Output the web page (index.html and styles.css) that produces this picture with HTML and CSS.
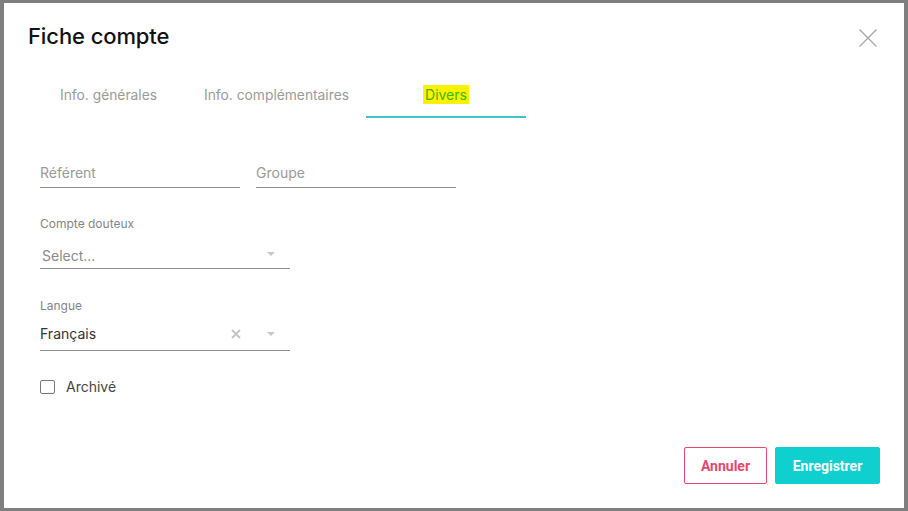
FILE: index.html
```html
<!DOCTYPE html>
<html lang="fr">
<head>
<meta charset="utf-8">
<title>Fiche compte</title>
<link rel="stylesheet" href="styles.css">
</head>
<body>
<div class="dialog">
  <div class="header">
    <h1 class="title">Fiche compte</h1>
    <button class="close" aria-label="Fermer">
      <svg width="18" height="18" viewBox="0 0 18 18"><path d="M0.5 0.5 L17.5 17.5 M17.5 0.5 L0.5 17.5" stroke="#a8a8a8" stroke-width="1.4" fill="none"/></svg>
    </button>
  </div>
  <div class="tabs">
    <div class="tab tab-1">Info. générales</div>
    <div class="tab tab-2">Info. complémentaires</div>
    <div class="tab tab-active"><span class="mark">Divers</span></div>
  </div>
  <div class="form">
    <div class="row">
      <div class="input"><span class="placeholder">Référent</span></div>
      <div class="input"><span class="placeholder">Groupe</span></div>
    </div>
    <div class="label label-1">Compte douteux</div>
    <div class="select select-1">
      <span class="placeholder sel-ph">Select...</span>
      <span class="icons"><span class="caret"></span></span>
    </div>
    <div class="label label-2">Langue</div>
    <div class="select select-2">
      <span class="value">Français</span>
      <span class="icons">
        <svg class="clear" width="10" height="10" viewBox="0 0 10 10"><path d="M1 1 L9 9 M9 1 L1 9" stroke="#c4c4c4" stroke-width="1.8" fill="none"/></svg>
        <span class="caret"></span>
      </span>
    </div>
    <label class="check">
      <span class="box"></span>
      <span class="check-text">Archivé</span>
    </label>
  </div>
  <div class="footer">
    <button class="btn btn-cancel">Annuler</button>
    <button class="btn btn-save">Enregistrer</button>
  </div>
</div>
</body>
</html>
```
FILE: styles.css
```css
* { box-sizing: border-box; }
html, body { margin: 0; height: 100%; }
body {
  background: #7f7f7f;
  padding: 3px 4px;
  font-family: Inter, Roboto, "Liberation Sans", Arial, sans-serif;
}
.dialog {
  width: 900px;
  height: 505px;
  background: #fff;
  display: flex;
  flex-direction: column;
  padding: 0 24px 24px 24px;
}
.header {
  display: flex;
  justify-content: space-between;
  align-items: flex-start;
  padding-top: 19px;
}
.title {
  margin: 0;
  font-size: 22px;
  line-height: 28px;
  font-weight: 500;
  color: #111;
  letter-spacing: -0.1px;
}
.close {
  border: 0;
  background: none;
  padding: 0;
  margin: 7px 3px 0 0;
  width: 18px;
  height: 18px;
  display: block;
}
.close svg { display: block; }
.tabs {
  display: flex;
  margin-top: 25px;
  margin-left: 32px;
}
.tab {
  font-size: 13.8px;
  line-height: 20px;
  color: #9a9a9a;
  padding: 10px 0 11px;
  border-bottom: 2px solid transparent;
  white-space: nowrap;
}
.tab-1 { width: 144px; }
.tab-2 { width: 162px; }
.tab-active {
  width: 160px;
  text-align: center;
  border-bottom-color: #3cc6c6;
}
.mark {
  background: #fff200;
  color: #3ab700;
  padding: 1px 2px;
  font-size: 14px;
}
.form {
  padding-left: 12px;
}
.row {
  display: flex;
  gap: 16px;
  margin-top: 45px;
}
.input {
  width: 200px;
  height: 25px;
  border-bottom: 1px solid #8c8c8c;
  font-size: 14px;
  line-height: 20px;
}
.placeholder { color: #9a9a9a; }
.label {
  font-size: 12px;
  line-height: 16px;
  color: #858585;
}
.label-1 { margin-top: 28px; }
.label-2 { margin-top: 29px; }
.select {
  width: 250px;
  border-bottom: 1px solid #8c8c8c;
  display: flex;
  justify-content: space-between;
  align-items: center;
  font-size: 14px;
  line-height: 20px;
}
.select-1 { margin-top: 14px; height: 23px; padding-bottom: 2px; }
.select-2 { margin-top: 10px; height: 27px; padding-bottom: 6px; }
.sel-ph { padding-left: 2px; color: #8a8a8a; }
.value { color: #333; }
.icons {
  display: flex;
  align-items: center;
  margin-right: 15px;
}
.clear { display: block; margin-right: 26px; }
.caret {
  display: block;
  width: 0;
  height: 0;
  border-left: 4px solid transparent;
  border-right: 4px solid transparent;
  border-top: 4px solid #c8c8c8;
  margin-top: -4px;
}
.select-2 .caret { margin-top: 0; }
.check {
  display: flex;
  align-items: center;
  margin-top: 28px;
  height: 16px;
}
.box {
  width: 15px;
  height: 14px;
  border: 1.5px solid #777;
  border-radius: 2px;
}
.check-text {
  margin-left: 11px;
  font-size: 14px;
  line-height: 16px;
  color: #444;
}
.footer {
  margin-top: auto;
  display: flex;
  justify-content: flex-end;
  gap: 8px;
}
.btn {
  height: 37px;
  border-radius: 2px;
  font-family: Roboto, "Liberation Sans", Arial, sans-serif;
  font-size: 14px;
  font-weight: 700;
  padding: 0;
}
.btn-cancel {
  width: 83px;
  background: #fff;
  border: 1px solid #e8476a;
  color: #e8476a;
}
.btn-save {
  width: 105px;
  background: #0fcfcf;
  border: 1px solid #0fcfcf;
  color: #fff;
}
```
